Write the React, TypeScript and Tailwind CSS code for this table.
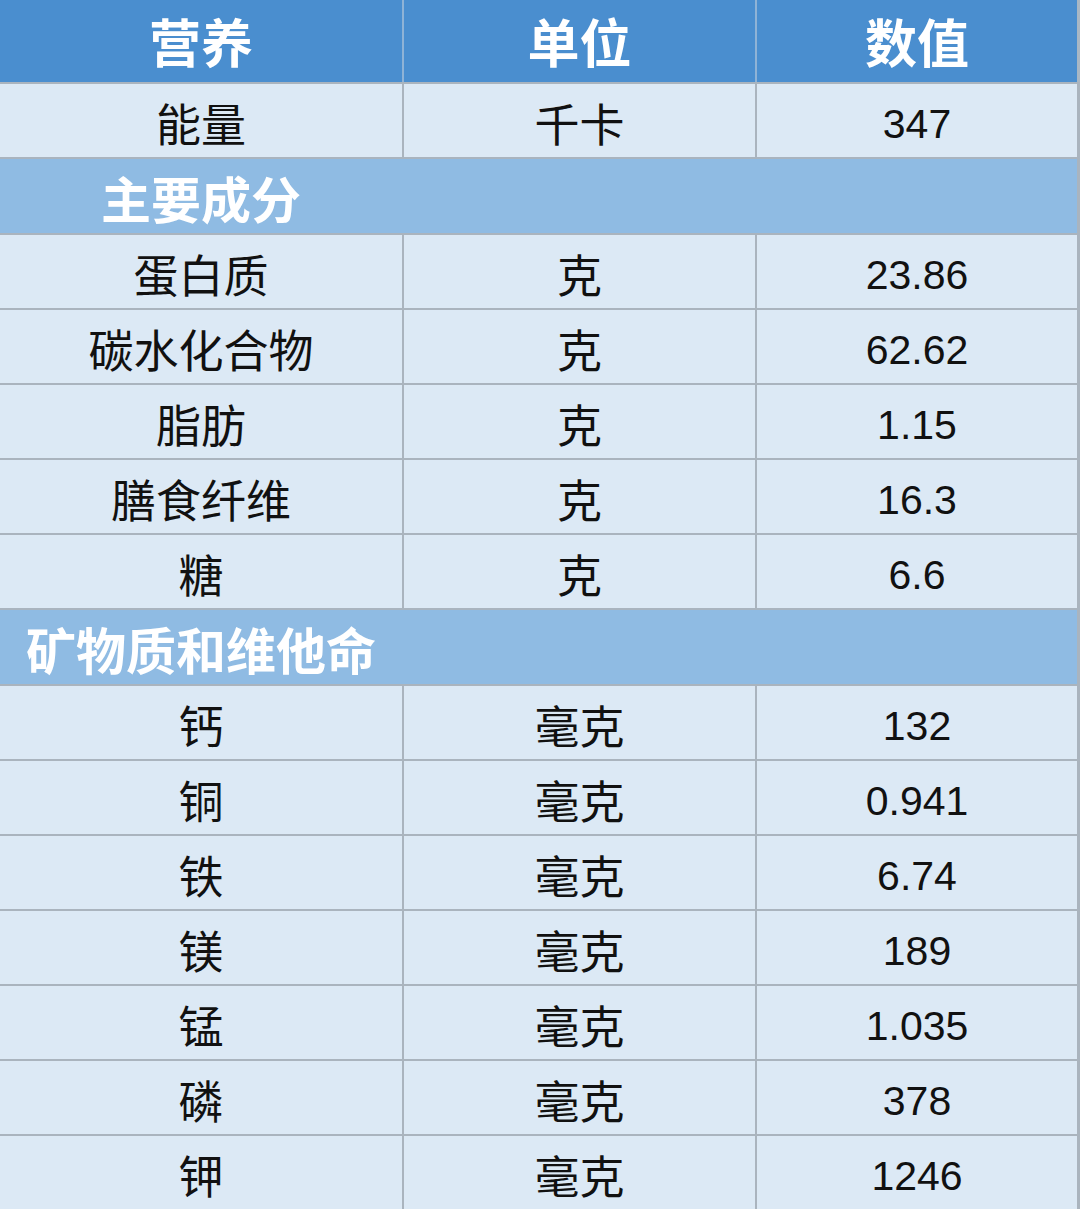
import React from "react";

type Row = { kind: "data"; name: string; unit: string; value: string; h?: string } | { kind: "section"; title: string; h?: string };

const rows: Row[] = [
  { kind: "data", name: "能量", unit: "千卡", value: "347" },
  { kind: "section", title: "主要成分", h: "h-[76px]" },
  { kind: "data", name: "蛋白质", unit: "克", value: "23.86" },
  { kind: "data", name: "碳水化合物", unit: "克", value: "62.62" },
  { kind: "data", name: "脂肪", unit: "克", value: "1.15" },
  { kind: "data", name: "膳食纤维", unit: "克", value: "16.3" },
  { kind: "data", name: "糖", unit: "克", value: "6.6" },
  { kind: "section", title: "矿物质和维他命", h: "h-[76px]" },
  { kind: "data", name: "钙", unit: "毫克", value: "132" },
  { kind: "data", name: "铜", unit: "毫克", value: "0.941" },
  { kind: "data", name: "铁", unit: "毫克", value: "6.74" },
  { kind: "data", name: "镁", unit: "毫克", value: "189" },
  { kind: "data", name: "锰", unit: "毫克", value: "1.035" },
  { kind: "data", name: "磷", unit: "毫克", value: "378" },
  { kind: "data", name: "钾", unit: "毫克", value: "1246" },
];

const cjk = "font-['Noto_Sans_CJK_SC','Noto_Sans',sans-serif]";

export default function App() {
  return (
    <div className={`w-[1080px] h-[1209px] overflow-hidden bg-[#dce9f5] ${cjk}`}>
      <div className="flex h-[82px] bg-[#4a8ecf] text-white font-bold text-[52px] leading-none">
        <div className="w-[404px] border-r-2 border-[#8fb3d6] flex items-center justify-center">营养</div>
        <div className="w-[353px] border-r-2 border-[#8fb3d6] flex items-center justify-center">单位</div>
        <div className="flex-1 border-r-[3px] border-[#a9b7c4] flex items-center justify-center">数值</div>
      </div>
      {rows.map((r, i) =>
        r.kind === "section" ? (
          <div key={i} className={`flex ${r.h ?? "h-[75px]"} border-t-2 border-[#a9b4bf] bg-[#8fbbe3] border-r-[3px]`}>
            <div className="w-[402px] flex items-center justify-center whitespace-nowrap pt-[2px] text-white font-bold text-[50px] leading-none">
              {r.title}
            </div>
          </div>
        ) : (
          <div
            key={i}
            className={`flex ${r.h ?? "h-[75px]"} border-t-2 border-[#aab4be] text-[#111111] leading-none`}
          >
            <div className="w-[404px] border-r-2 border-[#aab4be] flex items-center justify-center pt-[4px] text-[45px]">
              {r.name}
            </div>
            <div className="w-[353px] border-r-2 border-[#aab4be] flex items-center justify-center pt-[4px] text-[45px]">
              {r.unit}
            </div>
            <div className="flex-1 border-r-[3px] border-[#aab4be] flex items-center justify-center pt-[8px] text-[41px] font-['Liberation_Sans','Arial',sans-serif]">
              {r.value}
            </div>
          </div>
        )
      )}
    </div>
  );
}
